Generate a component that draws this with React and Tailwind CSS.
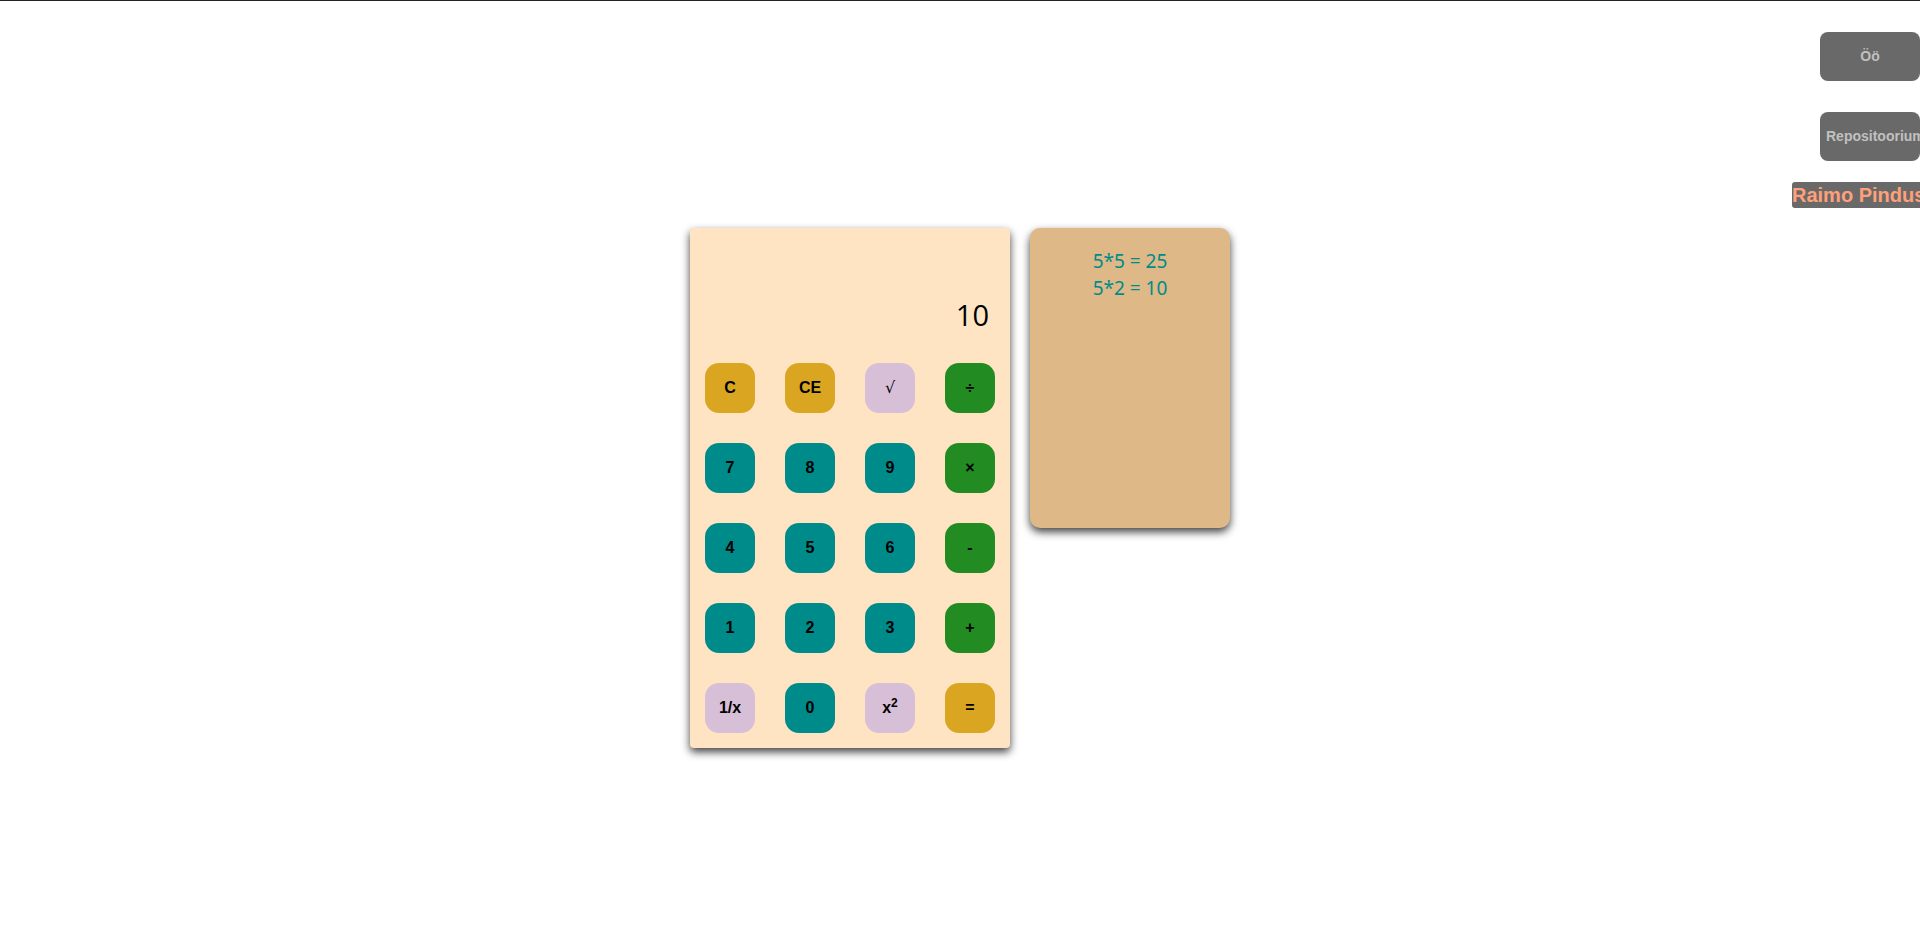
import React from "react";

const keys = [
  { label: "C", color: "bg-[#daa520]" },
  { label: "CE", color: "bg-[#daa520]" },
  { label: "√", color: "bg-[#d8bfd8]", thin: true },
  { label: "÷", color: "bg-[#228b22]" },
  { label: "7", color: "bg-[#008b8b]" },
  { label: "8", color: "bg-[#008b8b]" },
  { label: "9", color: "bg-[#008b8b]" },
  { label: "×", color: "bg-[#228b22]" },
  { label: "4", color: "bg-[#008b8b]" },
  { label: "5", color: "bg-[#008b8b]" },
  { label: "6", color: "bg-[#008b8b]" },
  { label: "-", color: "bg-[#228b22]" },
  { label: "1", color: "bg-[#008b8b]" },
  { label: "2", color: "bg-[#008b8b]" },
  { label: "3", color: "bg-[#008b8b]" },
  { label: "+", color: "bg-[#228b22]" },
  { label: "1/x", color: "bg-[#d8bfd8]" },
  { label: "0", color: "bg-[#008b8b]" },
  { label: "x2", color: "bg-[#d8bfd8]", sup: true },
  { label: "=", color: "bg-[#daa520]" },
];

const history = ["5*5 = 25", "5*2 = 10"];

export default function App() {
  return (
    <div className="min-h-[949px] w-full overflow-hidden border-t border-[#222] bg-white font-['Liberation_Sans',Arial,sans-serif]">
      {/* Top right links */}
      <div className="flex justify-end pt-[31px]">
        <div className="flex w-[128px] flex-col items-start">
          <button className="ml-[28px] h-[49px] w-[100px] rounded-[8px] bg-[#696969] px-[6px] text-[14px] font-bold text-[#c0c0c0]">
            Öö
          </button>
          <button className="ml-[28px] mt-[31px] h-[49px] w-[100px] whitespace-nowrap rounded-[8px] bg-[#696969] px-[6px] text-left text-[14px] font-bold text-[#c0c0c0]">
            Repositoorium
          </button>
          <div className="mt-[21px] h-[26px] whitespace-nowrap rounded-[3px] bg-[#696969] pr-[4px] text-[20px] font-bold leading-[26px] text-[#ffa07a]">
            Raimo Pindus
          </div>
        </div>
      </div>

      {/* Calculator + history */}
      <div className="mt-[20px] flex items-start justify-center gap-[20px]">
        <div className="w-[320px] rounded-[4px] bg-[#ffe4c4] shadow-[0_4px_8px_rgba(0,0,0,0.75)]">
          <div className="flex h-[120px] items-end justify-end pb-[13px] pr-[21px] font-['Open_Sans',sans-serif] text-[29px] leading-[41px] text-black">
            10
          </div>
          <div className="grid grid-cols-4">
            {keys.map((k) => (
              <div key={k.label} className="flex h-[80px] items-center justify-center">
                <button
                  className={`flex h-[50px] w-[50px] items-center justify-center rounded-[14px] text-[16px] text-black ${k.color} ${
                    k.thin ? "font-['DejaVu_Serif',serif] font-normal text-[#556]" : "font-bold"
                  }`}
                >
                  {k.sup ? (
                    <span>
                      x<sup className="text-[12px]">2</sup>
                    </span>
                  ) : (
                    k.label
                  )}
                </button>
              </div>
            ))}
          </div>
        </div>

        <div className="h-[300px] w-[200px] rounded-[10px] bg-[#deb887] pt-[20px] text-center font-['Noto_Sans',sans-serif] text-[19px] leading-[27px] text-[#008b8b] shadow-[0_4px_8px_rgba(0,0,0,0.75)]">
          {history.map((h) => (
            <div key={h}>{h}</div>
          ))}
        </div>
      </div>
    </div>
  );
}
